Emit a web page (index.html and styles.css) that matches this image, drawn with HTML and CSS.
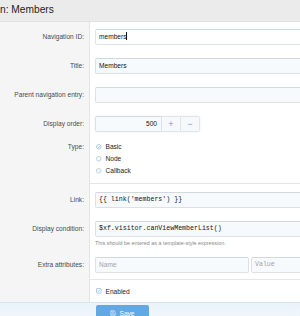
FILE: index.html
```html
<!DOCTYPE html>
<html lang="en">
<head>
  <meta charset="UTF-8">
  <title>Edit navigation: Members</title>
  <link rel="stylesheet" href="styles.css">
</head>
<body>
  <div class="page-header">
    <h1 class="page-title">n: Members</h1>
  </div>

  <form class="block">
    <!-- Navigation ID -->
    <div class="form-row">
      <div class="form-label">Navigation ID:</div>
      <div class="form-field">
        <div class="input is-focused"><span>members</span><span class="caret"></span></div>
      </div>
    </div>

    <div class="form-row">
      <div class="form-label">Title:</div>
      <div class="form-field">
        <div class="input">Members</div>
      </div>
    </div>

    <div class="form-row">
      <div class="form-label">Parent navigation entry:</div>
      <div class="form-field">
        <div class="input"></div>
      </div>
    </div>

    <div class="form-row">
      <div class="form-label">Display order:</div>
      <div class="form-field">
        <div class="input-group">
          <div class="input input-num">500</div>
          <span class="input-btn">+</span>
          <span class="input-btn">&minus;</span>
        </div>
      </div>
    </div>

    <!-- Type -->
    <div class="form-row form-row-choices">
      <div class="form-label">Type:</div>
      <div class="form-field">
        <ul class="choices">
          <li>
            <svg class="choice-icon" viewBox="0 0 12 12"><circle cx="6" cy="6" r="5" fill="none" stroke="#6aa3d5" stroke-width="1.2"/><path d="M3.6 6.2l1.7 1.7 3.2-3.4" fill="none" stroke="#6aa3d5" stroke-width="1.2"/></svg>
            Basic
          </li>
          <li>
            <svg class="choice-icon" viewBox="0 0 12 12"><circle cx="6" cy="6" r="5" fill="none" stroke="#7aaedb" stroke-width="1.2"/></svg>
            Node
          </li>
          <li>
            <svg class="choice-icon" viewBox="0 0 12 12"><circle cx="6" cy="6" r="5" fill="none" stroke="#7aaedb" stroke-width="1.2"/></svg>
            Callback
          </li>
        </ul>
      </div>
    </div>

    <div class="form-row form-row-sep">
      <div class="form-label">Link:</div>
      <div class="form-field">
        <div class="input input-code">{{ link('members') }}</div>
      </div>
    </div>

    <div class="form-row form-row-help">
      <div class="form-label">Display condition:</div>
      <div class="form-field">
        <div class="input input-code">$xf.visitor.canViewMemberList()</div>
        <div class="form-explain">This should be entered as a template-style expression.</div>
      </div>
    </div>

    <div class="form-row form-row-tight">
      <div class="form-label">Extra attributes:</div>
      <div class="form-field">
        <div class="input-pair">
          <div class="input placeholder">Name</div>
          <div class="input input-code placeholder">Value</div>
        </div>
      </div>
    </div>

    <div class="form-row form-row-check">
      <div class="form-label"></div>
      <div class="form-field">
        <label class="check">
          <svg class="choice-icon" viewBox="0 0 12 12"><rect x="1" y="1" width="10" height="10" rx="1.5" fill="none" stroke="#6aa3d5" stroke-width="1.2"/><path d="M3.4 6.1l1.8 1.8 3.4-3.7" fill="none" stroke="#6aa3d5" stroke-width="1.2"/></svg>
          Enabled
        </label>
      </div>
    </div>

    <div class="form-submit">
      <div class="form-label"></div>
      <div class="submit-field">
        <button type="button" class="button-primary">
          <svg class="save-icon" viewBox="0 0 12 12"><path d="M1.5 1.5h7l2 2v7h-9z" fill="none" stroke="#fff" stroke-width="1"/><path d="M3.5 1.5v3h4v-3M3.5 10.5v-3h5v3" fill="none" stroke="#fff" stroke-width="1"/></svg>
          Save
        </button>
      </div>
    </div>
  </form>
</body>
</html>
```

FILE: styles.css
```css
html, body {
  margin: 0;
  padding: 0;
  overflow: hidden;
  background: #fff;
}

body {
  font-family: "Liberation Sans", Arial, sans-serif;
  font-size: 6.6px;
  color: #141414;
  width: 300px;
}

.page-header {
  background: #ebebeb;
  border-bottom: 1px solid #e2e2e2;
  height: 21px;
  overflow: hidden;
}

.page-title {
  margin: 0;
  font-size: 10.2px;
  font-weight: normal;
  line-height: 19px;
  color: #1d1d1d;
}

/* the form is wider than the window, its right side is cut off */
.block {
  margin: 0;
  overflow: hidden;
}

.form-row {
  display: grid;
  grid-template-columns: 90px 1fr;
}

.form-label {
  background: #f5f5f5;
  border-right: 1px solid #e4e4e4;
  text-align: right;
  padding: 7px 5px 6px 0;
  line-height: 16px;
  color: #4b4b4b;
}

.form-field {
  padding: 7px 0 6px 5px;
  margin-right: -40px;
}

.input {
  box-sizing: border-box;
  height: 16px;
  line-height: 14px;
  padding: 0 3px;
  border: 1px solid #dde1e5;
  border-top-color: #d2d8de;
  border-radius: 2px;
  background: #f7fafd;
  color: #141414;
  white-space: nowrap;
  overflow: hidden;
}

.input.is-focused {
  background: #fff;
  border-color: #dde4ec;
  border-top-color: #c9d9ea;
}

.caret {
  display: inline-block;
  width: 0;
  height: 8px;
  border-right: 1px solid #141414;
  vertical-align: -1px;
}

.input-code {
  font-family: "Liberation Mono", "DejaVu Sans Mono", monospace;
}

.placeholder {
  color: #a3a3a3;
}

/* display order with +/- buttons */
.input-group {
  display: flex;
  width: 105px;
  border-radius: 2px;
  box-shadow: 0 0 3px rgba(0, 0, 0, 0.06);
}

.input-num {
  flex: 1;
  text-align: right;
  border-radius: 2px 0 0 2px;
  padding-right: 4px;
}

.input-btn {
  box-sizing: border-box;
  width: 19px;
  height: 16px;
  line-height: 14px;
  text-align: center;
  font-size: 9px;
  color: #6f9fcc;
  background: #f6f8fb;
  border: 1px solid #e1e5e9;
  border-left: none;
}

.input-btn:last-child {
  border-radius: 0 2px 2px 0;
}

/* radios */
.form-row-choices .form-label,
.form-row-choices .form-field {
  padding-top: 3px;
  line-height: 12px;
}

.choices {
  list-style: none;
  margin: 0;
  padding: 0 0 0 1px;
}

.choices li,
.check {
  display: flex;
  align-items: center;
  gap: 4px;
  height: 12px;
  color: #1d1d1d;
}

.choice-icon {
  width: 5.5px;
  height: 5.5px;
}

.form-row-sep .form-field {
  border-top: 1px solid #e6e6e6;
  padding-top: 8px;
}

.form-row-sep .form-label {
  padding-top: 9px;
}

.form-row-help .form-field {
  padding-bottom: 4px;
}

.form-explain {
  margin-top: 2px;
  font-size: 5.4px;
  line-height: 8px;
  color: #8a8a8a;
}

.form-row-tight .form-label,
.form-row-tight .form-field {
  padding-top: 6px;
}

.input-pair {
  display: flex;
  gap: 2px;
}

.input-pair .input:first-child {
  width: 154px;
  flex: none;
}

.input-pair .input:last-child {
  flex: 1;
}

.form-row-check .form-field {
  border-top: 1px solid #e6e6e6;
  padding: 5px 0 5px 6px;
}

.form-row-check .form-label {
  padding: 0;
}

/* footer */
.form-submit {
  display: grid;
  grid-template-columns: 90px 1fr;
  border-top: 1px solid #d9e4ee;
  background: linear-gradient(to bottom, #eaf2fa, #f3f8fc);
  height: 20px;
}

.form-submit .form-label {
  background: none;
  border: none;
  padding: 0;
}

.submit-field {
  padding: 2px 0 0 6px;
}

.button-primary {
  display: flex;
  align-items: center;
  justify-content: center;
  gap: 3px;
  width: 53px;
  height: 16px;
  padding: 0;
  border: none;
  border-radius: 2px;
  background: #62a8e2;
  color: #fff;
  font-family: inherit;
  font-size: 6.6px;
}

.save-icon {
  width: 6px;
  height: 6px;
}
```
